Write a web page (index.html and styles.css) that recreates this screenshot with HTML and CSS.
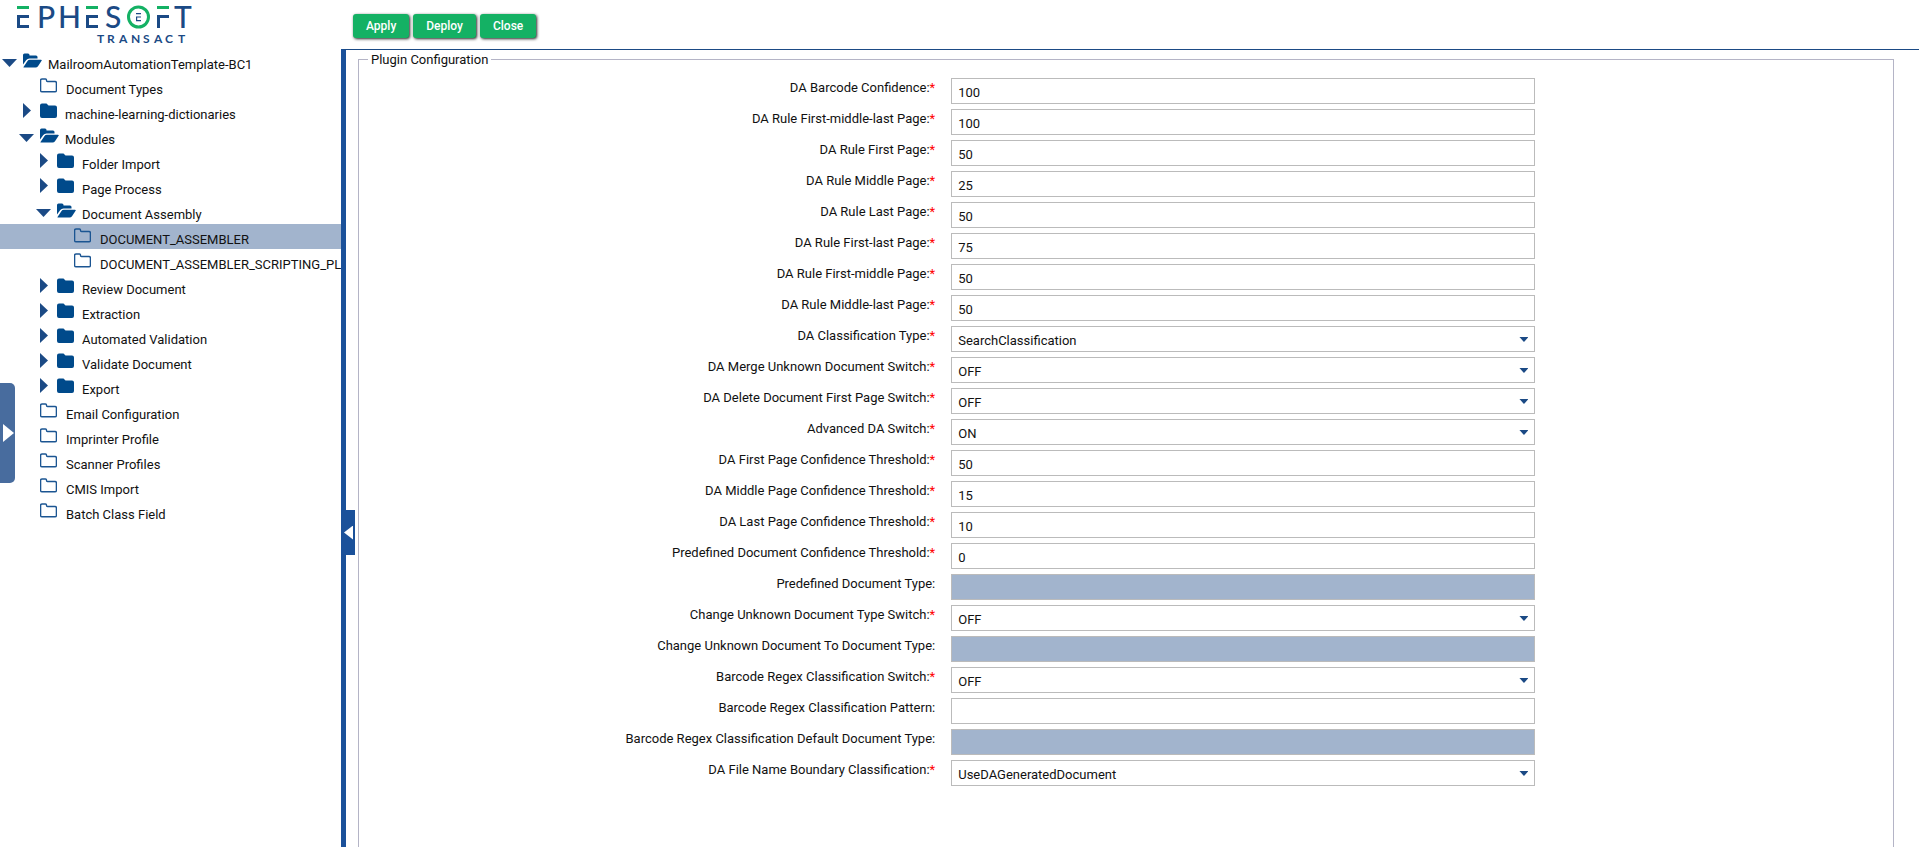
FILE: index.html
```html
<!DOCTYPE html>
<html lang="en">
<head>
<meta charset="utf-8">
<title>Ephesoft Transact</title>
<link rel="stylesheet" href="styles.css">
</head>
<body>
<svg class="sprite" aria-hidden="true">
  <symbol id="closed" viewBox="0 0 17 15"><path d="M2 0.5h4.5l2 2H15a2 2 0 0 1 2 2V13a2 2 0 0 1-2 2H2a2 2 0 0 1-2-2V2.500a2 2 0 0 1 2-2z" fill="#004a8b"/></symbol>
  <symbol id="leaf" viewBox="0 0 17 15"><path d="M2 1h3.500q1 0 1 1v0.500q0 1 1 1H15q1.400 0 1.400 1.400V12.400q0 1.400-1.400 1.400H2q-1.400 0-1.400-1.400V2.400Q0.600 1 2 1z" fill="none" stroke="#1b5592" stroke-width="1.400"/></symbol>
  <symbol id="open" viewBox="0 0 19 15"><path d="M0 11.500V2q0-1.500 1.500-1.500H5Q6.500 0.500 6.500 2v0.500H13q1.500 0 1.500 1.500v1.500H6.500q-2 0-3.200 1.500zM0.500 14L4.500 8q0.800-1.300 2.300-1.300H18q1.300 0 0.600 1.100l-3.600 5.400q-0.900 1.300-2.400 1.300H1.200q-1 0-0.700-0.500z" fill="#004a8b"/></symbol>
</svg>
<div class="app">
  <aside class="sidebar">
    <svg class="logo" viewBox="0 0 200 49" role="img" aria-label="Ephesoft Transact">
      <g fill="#14b164"><rect x="17" y="6" width="12" height="3"/><rect x="86" y="6" width="12" height="3"/><rect x="157" y="6" width="12" height="3"/></g>
      <g fill="#1b4a85"><path d="M17 15h12v3h-9v7h9v3H17zM86 15h12v3h-9v7h9v3H86zM157 15h12v3h-9v10h-3z"/><path d="M136 13h5v1.200h-5zM136 16.500h5v1.100h-3.800v2.400h3.800v1.200h-5z"/></g>
      <circle cx="138.500" cy="17" r="10" fill="none" stroke="#14b164" stroke-width="3"/>
      <text class="logo-name" y="28" x="37 58 105 174">PHST</text>
      <text class="logo-sub" y="43" x="97 107 119 131 143 154 165 178">TRANSACT</text>
    </svg>
    <ul class="tree">
      <li class="node l0"><i class="arrow down"></i><svg class="icon wide"><use href="#open"/></svg><span>MailroomAutomationTemplate-BC1</span></li>
      <li class="node leaf l1"><i class="arrow"></i><svg class="icon"><use href="#leaf"/></svg><span>Document Types</span></li>
      <li class="node l1"><i class="arrow right"></i><svg class="icon"><use href="#closed"/></svg><span>machine-learning-dictionaries</span></li>
      <li class="node l1"><i class="arrow down"></i><svg class="icon wide"><use href="#open"/></svg><span>Modules</span></li>
      <li class="node l2"><i class="arrow right"></i><svg class="icon"><use href="#closed"/></svg><span>Folder Import</span></li>
      <li class="node l2"><i class="arrow right"></i><svg class="icon"><use href="#closed"/></svg><span>Page Process</span></li>
      <li class="node l2"><i class="arrow down"></i><svg class="icon wide"><use href="#open"/></svg><span>Document Assembly</span></li>
      <li class="node leaf l3 selected"><i class="arrow"></i><svg class="icon"><use href="#leaf"/></svg><span>DOCUMENT_ASSEMBLER</span></li>
      <li class="node leaf l3"><i class="arrow"></i><svg class="icon"><use href="#leaf"/></svg><span>DOCUMENT_ASSEMBLER_SCRIPTING_PLUGIN</span></li>
      <li class="node l2"><i class="arrow right"></i><svg class="icon"><use href="#closed"/></svg><span>Review Document</span></li>
      <li class="node l2"><i class="arrow right"></i><svg class="icon"><use href="#closed"/></svg><span>Extraction</span></li>
      <li class="node l2"><i class="arrow right"></i><svg class="icon"><use href="#closed"/></svg><span>Automated Validation</span></li>
      <li class="node l2"><i class="arrow right"></i><svg class="icon"><use href="#closed"/></svg><span>Validate Document</span></li>
      <li class="node l2"><i class="arrow right"></i><svg class="icon"><use href="#closed"/></svg><span>Export</span></li>
      <li class="node leaf l1"><i class="arrow"></i><svg class="icon"><use href="#leaf"/></svg><span>Email Configuration</span></li>
      <li class="node leaf l1"><i class="arrow"></i><svg class="icon"><use href="#leaf"/></svg><span>Imprinter Profile</span></li>
      <li class="node leaf l1"><i class="arrow"></i><svg class="icon"><use href="#leaf"/></svg><span>Scanner Profiles</span></li>
      <li class="node leaf l1"><i class="arrow"></i><svg class="icon"><use href="#leaf"/></svg><span>CMIS Import</span></li>
      <li class="node leaf l1"><i class="arrow"></i><svg class="icon"><use href="#leaf"/></svg><span>Batch Class Field</span></li>
    </ul>
    <button class="drawer" type="button" aria-label="Open navigation"></button>
  </aside>
  <main class="main">
    <div class="toolbar">
      <button class="btn" type="button">Apply</button>
      <button class="btn" type="button">Deploy</button>
      <button class="btn" type="button">Close</button>
    </div>
    <div class="panel">
      <button class="collapse" type="button" aria-label="Collapse tree"></button>
      <fieldset class="config">
        <legend>Plugin Configuration</legend>
        <div class="row"><label for="f1">DA Barcode Confidence:<b>*</b></label><input class="field" id="f1" value="100"></div>
        <div class="row"><label for="f2">DA Rule First-middle-last Page:<b>*</b></label><input class="field" id="f2" value="100"></div>
        <div class="row"><label for="f3">DA Rule First Page:<b>*</b></label><input class="field" id="f3" value="50"></div>
        <div class="row"><label for="f4">DA Rule Middle Page:<b>*</b></label><input class="field" id="f4" value="25"></div>
        <div class="row"><label for="f5">DA Rule Last Page:<b>*</b></label><input class="field" id="f5" value="50"></div>
        <div class="row"><label for="f6">DA Rule First-last Page:<b>*</b></label><input class="field" id="f6" value="75"></div>
        <div class="row"><label for="f7">DA Rule First-middle Page:<b>*</b></label><input class="field" id="f7" value="50"></div>
        <div class="row"><label for="f8">DA Rule Middle-last Page:<b>*</b></label><input class="field" id="f8" value="50"></div>
        <div class="row"><label for="f9">DA Classification Type:<b>*</b></label><div class="pick"><select class="field" id="f9"><option>SearchClassification</option></select></div></div>
        <div class="row"><label for="f10">DA Merge Unknown Document Switch:<b>*</b></label><div class="pick"><select class="field" id="f10"><option>OFF</option><option>ON</option></select></div></div>
        <div class="row"><label for="f11">DA Delete Document First Page Switch:<b>*</b></label><div class="pick"><select class="field" id="f11"><option>OFF</option><option>ON</option></select></div></div>
        <div class="row"><label for="f12">Advanced DA Switch:<b>*</b></label><div class="pick"><select class="field" id="f12"><option>ON</option><option>OFF</option></select></div></div>
        <div class="row"><label for="f13">DA First Page Confidence Threshold:<b>*</b></label><input class="field" id="f13" value="50"></div>
        <div class="row"><label for="f14">DA Middle Page Confidence Threshold:<b>*</b></label><input class="field" id="f14" value="15"></div>
        <div class="row"><label for="f15">DA Last Page Confidence Threshold:<b>*</b></label><input class="field" id="f15" value="10"></div>
        <div class="row"><label for="f16">Predefined Document Confidence Threshold:<b>*</b></label><input class="field" id="f16" value="0"></div>
        <div class="row"><label for="f17">Predefined Document Type:</label><input class="field" id="f17" disabled></div>
        <div class="row"><label for="f18">Change Unknown Document Type Switch:<b>*</b></label><div class="pick"><select class="field" id="f18"><option>OFF</option><option>ON</option></select></div></div>
        <div class="row"><label for="f19">Change Unknown Document To Document Type:</label><input class="field" id="f19" disabled></div>
        <div class="row"><label for="f20">Barcode Regex Classification Switch:<b>*</b></label><div class="pick"><select class="field" id="f20"><option>OFF</option><option>ON</option></select></div></div>
        <div class="row"><label for="f21">Barcode Regex Classification Pattern:</label><input class="field" id="f21"></div>
        <div class="row"><label for="f22">Barcode Regex Classification Default Document Type:</label><input class="field" id="f22" disabled></div>
        <div class="row"><label for="f23">DA File Name Boundary Classification:<b>*</b></label><div class="pick"><select class="field" id="f23"><option>UseDAGeneratedDocument</option></select></div></div>
      </fieldset>
    </div>
  </main>
</div>
</body>
</html>
```
FILE: styles.css
```css
* { box-sizing: border-box; }
body {
  margin: 0;
  background: #fff;
  color: #111;
  font: 13px/19px Roboto, "Liberation Sans", sans-serif;
}
.sprite { display: none; }
.app { display: flex; min-height: 100vh; }

/* Tree */
.sidebar { position: relative; flex: 0 0 341px; overflow: hidden; }
.logo { display: block; width: 200px; height: 49px; }
.logo-name { font: 500 30px Lato, sans-serif; fill: #1b4a85; }
.logo-sub { font: 700 12px Lato, sans-serif; fill: #1b4a85; }
.tree { list-style: none; margin: 0; padding: 0; }
.node { display: flex; height: 25px; padding-top: 6px; white-space: nowrap; }
.l1 { padding-left: 17px; }
.l2 { padding-left: 34px; }
.l3 { padding-left: 51px; }
.selected { background: #a2b4cd; }
.icon { flex: none; width: 17px; height: 15px; margin: -2px 8px 0 0; }
.icon.wide { width: 19px; margin-right: 6px; }
.leaf .icon { margin-right: 9px; }
.arrow { flex: 0 0 23px; }
.arrow::before { content: ""; display: block; background: #1b4a85; }
.down::before { width: 15px; height: 8px; margin: 4px 0 0 2px; clip-path: polygon(0 0, 100% 0, 50% 100%); }
.right::before { width: 8px; height: 15px; margin: -2px 0 0 6px; clip-path: polygon(0 0, 100% 50%, 0 100%); }

/* Edge handles */
.drawer {
  position: absolute;
  left: 0;
  top: 383px;
  width: 15px;
  height: 100px;
  padding: 0 0 0 3px;
  border: 0;
  border-radius: 0 5px 5px 0;
  background: #486c9e;
}
.drawer::before { content: ""; display: block; width: 11px; height: 18px; background: #fff; clip-path: polygon(0 0, 100% 50%, 0 100%); }
.collapse {
  position: absolute;
  left: -5px;
  top: 460px;
  width: 14px;
  height: 45px;
  padding: 0 0 0 3px;
  border: 0;
  background: #1b519a;
}
.collapse::before { content: ""; display: block; width: 9px; height: 14px; background: #fff; clip-path: polygon(100% 0, 100% 100%, 0 50%); }

/* Main area */
.main { flex: 1; min-width: 0; display: flex; flex-direction: column; }
.toolbar { display: flex; gap: 4px; height: 49px; padding: 14px 12px 11px; }
.btn {
  padding: 0 13px;
  border: 0;
  border-radius: 3px;
  background: #14b164;
  box-shadow: 1px 1px 3px #222;
  color: #fff;
  font: 500 12px/24px Roboto, "Liberation Sans", sans-serif;
}
.panel {
  position: relative;
  flex: 1;
  display: flex;
  border-top: 1px solid #1b4a85;
  border-left: 5px solid #1b519a;
  padding: 0 25px 0 12px;
}
.config {
  flex: 1;
  min-width: 0;
  margin: 0;
  padding: 9px 0 0;
  border: 1px solid #b4b4c6;
  border-bottom: 0;
}
.config legend { margin-left: 9px; padding: 0 3px; }
.row {
  display: grid;
  grid-template-columns: 593fr 585fr 358fr;
  margin-bottom: 5px;
}
.row label { padding-right: 16px; text-align: right; }
.row b { color: #f00; font-weight: 400; }
.field {
  display: block;
  width: 100%;
  height: 26px;
  margin: 0;
  padding: 2px 6px 0;
  border: 1px solid #bbb;
  border-radius: 0;
  background: #fff;
  color: #111;
  font: inherit;
  appearance: none;
}
.field:disabled { background: #a2b4cd; }
.pick { position: relative; }
.pick::after {
  content: "";
  position: absolute;
  right: 7px;
  top: 11px;
  width: 9px;
  height: 5px;
  background: #1b4a85;
  clip-path: polygon(0 0, 100% 0, 50% 100%);
  pointer-events: none;
}
```
